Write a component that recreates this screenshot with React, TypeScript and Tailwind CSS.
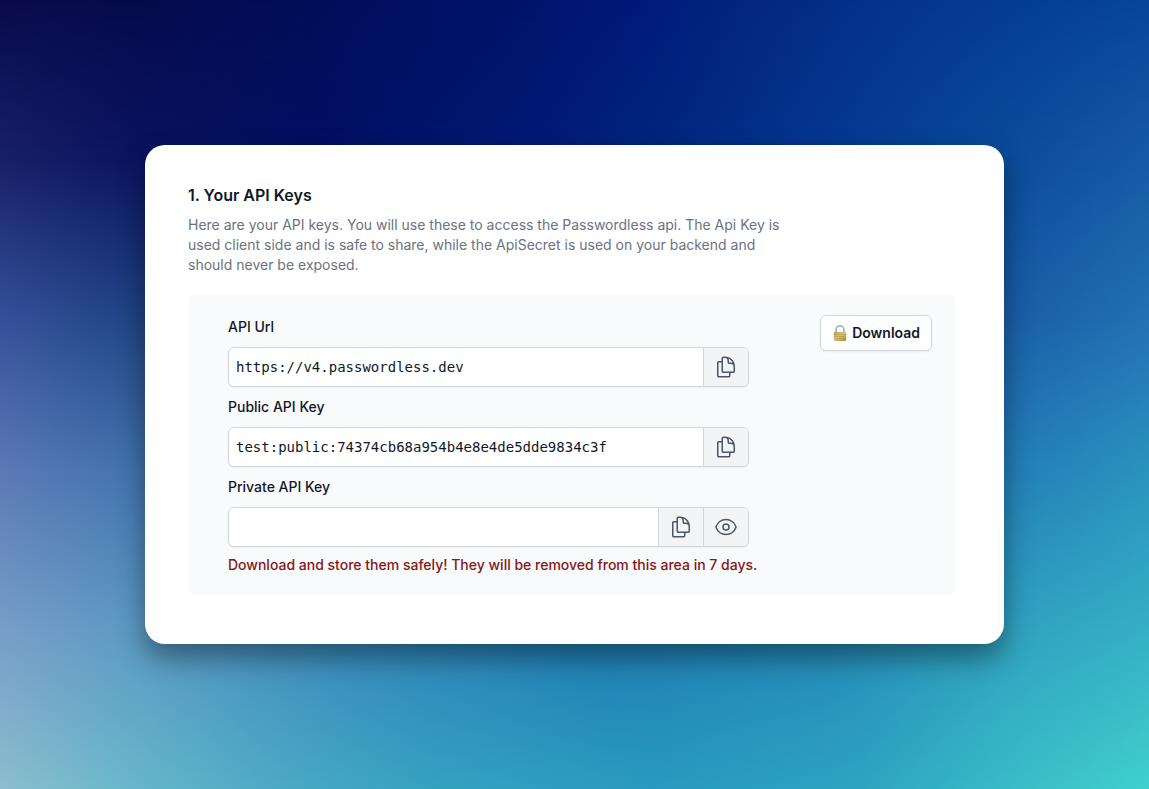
import React, { useState } from 'react';

// Heroicons outline "document-duplicate", folded corner variant
const CopyIcon: React.FC = () => (
  <svg
    className="h-6 w-6"
    viewBox="0 0 24 24"
    fill="none"
    stroke="currentColor"
    strokeWidth={1.5}
    strokeLinecap="round"
    strokeLinejoin="round"
    aria-hidden="true"
  >
    <path d="M15.75 17.25v3.375c0 .621-.504 1.125-1.125 1.125h-9.75a1.125 1.125 0 01-1.125-1.125V7.875c0-.621.504-1.125 1.125-1.125H6.75a9.06 9.06 0 011.5.124m7.5 10.376h3.375c.621 0 1.125-.504 1.125-1.125V11.25c0-4.46-3.243-8.161-7.5-8.876a9.06 9.06 0 00-1.5-.124H9.375c-.621 0-1.125.504-1.125 1.125v3.5m7.5 10.375H9.375a1.125 1.125 0 01-1.125-1.125v-9.25m12 6.625v-1.875a3.375 3.375 0 00-3.375-3.375h-1.5a1.125 1.125 0 01-1.125-1.125v-1.5a3.375 3.375 0 00-3.375-3.375H9.75" />
  </svg>
);

const EyeIcon: React.FC = () => (
  <svg
    className="h-6 w-6"
    viewBox="0 0 24 24"
    fill="none"
    stroke="currentColor"
    strokeWidth={1.5}
    strokeLinecap="round"
    strokeLinejoin="round"
    aria-hidden="true"
  >
    <path d="M2.036 12.322a1.012 1.012 0 010-.639C3.423 7.51 7.36 4.5 12 4.5c4.638 0 8.573 3.007 9.963 7.178.07.207.07.431 0 .639C20.577 16.49 16.64 19.5 12 19.5c-4.638 0-8.573-3.007-9.963-7.178z" />
    <path d="M15 12a3 3 0 11-6 0 3 3 0 016 0z" />
  </svg>
);

const LockIcon: React.FC = () => (
  <svg className="h-4 w-4" viewBox="0 0 16 16" aria-hidden="true">
    <defs>
      <linearGradient id="lock-body" x1="0" y1="0" x2="1" y2="1">
        <stop offset="0" stopColor="#b5a062" />
        <stop offset="0.45" stopColor="#dcc37a" />
        <stop offset="1" stopColor="#ab8c38" />
      </linearGradient>
    </defs>
    <path d="M4 8V4.8a4 4 0 0 1 8 0V8" fill="none" stroke="#8fa6ba" strokeWidth="1.5" />
    <rect x="1.8" y="7" width="12.4" height="9" rx="0.8" fill="url(#lock-body)" />
    <path d="M2.2 9.5h11.6M2.2 11.5h11.6M2.2 13.5h11.6" stroke="#a08838" strokeWidth="0.4" />
  </svg>
);

interface KeyFieldProps {
  id: string;
  label: string;
  defaultValue: string;
  secret?: boolean;
}

const KeyField: React.FC<KeyFieldProps> = ({ id, label, defaultValue, secret }) => {
  const [visible, setVisible] = useState(false);
  const buttonClass =
    'flex w-[45px] shrink-0 items-center justify-center border-l border-gray-300 bg-gray-100 text-gray-600';

  return (
    <div>
      <label htmlFor={id} className="block text-sm font-medium text-gray-900">
        {label}
      </label>
      <div className="mt-2.5 flex h-10 overflow-hidden rounded-md border border-gray-300 bg-white shadow-xs">
        <input
          id={id}
          type={secret && !visible ? 'password' : 'text'}
          defaultValue={defaultValue}
          readOnly
          className="min-w-0 flex-1 px-[7px] font-['DejaVu_Sans_Mono',monospace] text-sm text-gray-900 outline-none"
        />
        <button
          type="button"
          aria-label={`Copy ${label}`}
          className={buttonClass}
          onClick={() => navigator.clipboard.writeText(defaultValue)}
        >
          <CopyIcon />
        </button>
        {secret && (
          <button
            type="button"
            aria-label={`Show ${label}`}
            className={buttonClass}
            onClick={() => setVisible(!visible)}
          >
            <EyeIcon />
          </button>
        )}
      </div>
    </div>
  );
};

// Horizontal colour bands, each faded into the one above it
const Backdrop: React.FC = () => (
  <div className="grid [grid-area:1/1]" aria-hidden="true">
    <div className="[grid-area:1/1] bg-[linear-gradient(90deg,#0a0a4e_0%,#060b4c_12%,#010e5a_28%,#001268_43%,#001a7a_56%,#04287e_66%,#053690_80%,#06469a_100%)]" />
    <div className="[grid-area:1/1] bg-[linear-gradient(90deg,#182066_0%,#09125e_13%,#000f62_28%,#001a74_45%,#00267e_57%,#053890_72%,#0a4c9a_88%,#165aa6_100%)] [mask-image:linear-gradient(transparent_0%,black_20%)]" />
    <div className="[grid-area:1/1] bg-[linear-gradient(90deg,#34509a_0%,#204484_12%,#103880_40%,#1058a0_70%,#1a5ea8_88%,#2470b4_100%)] [mask-image:linear-gradient(transparent_20%,black_40%)]" />
    <div className="[grid-area:1/1] bg-[linear-gradient(90deg,#5c7ab6_0%,#4274ae_12%,#2468a4_40%,#2070ac_70%,#2480b8_88%,#2a94be_100%)] [mask-image:linear-gradient(transparent_40%,black_60%)]" />
    <div className="[grid-area:1/1] bg-[linear-gradient(90deg,#789ec8_0%,#5c9ac4_12%,#3888bc_30%,#1e7cb4_52%,#2488b8_72%,#30a2c0_88%,#36b0c6_100%)] [mask-image:linear-gradient(transparent_60%,black_80%)]" />
    <div className="[grid-area:1/1] bg-[linear-gradient(90deg,#8cbece_0%,#6cb8cb_10%,#4caac5_24%,#36a2c1_37%,#289abe_57%,#2ea4c1_75%,#3abec8_89%,#40d0cc_100%)] [mask-image:linear-gradient(transparent_80%,black_100%)]" />
  </div>
);

const App: React.FC = () => {
  return (
    <div className="grid min-h-screen font-['Inter',sans-serif]">
      <Backdrop />
      <main className="z-10 flex items-center justify-center p-4 [grid-area:1/1]">
        <section className="w-full max-w-[859px] rounded-[20px] bg-white px-[43px] pt-[38px] pb-[49px] shadow-[0_14px_28px_rgba(0,0,0,0.4)]">
          <h1 className="text-base font-semibold text-gray-900">1. Your API Keys</h1>
          <p className="mt-2 max-w-[592px] text-sm text-gray-500">
            Here are your API keys. You will use these to access the Passwordless api. The Api Key is used
            client side and is safe to share, while the ApiSecret is used on your backend and should never be
            exposed.
          </p>

          <div className="mt-5 mr-[5px] flex items-start justify-between gap-6 rounded-md bg-slate-50 py-5 pr-6 pl-10">
            <div className="w-full max-w-[521px] pt-0.5">
              <div className="space-y-2.5">
                <KeyField id="api-url" label="API Url" defaultValue="https://v4.passwordless.dev" />
                <KeyField
                  id="public-key"
                  label="Public API Key"
                  defaultValue="test:public:74374cb68a954b4e8e4de5dde9834c3f"
                />
                <KeyField id="private-key" label="Private API Key" defaultValue="" secret />
              </div>
              <p className="mt-2 text-sm font-medium whitespace-nowrap text-red-900">
                Download and store them safely! They will be removed from this area in 7 days.
              </p>
            </div>
            <button
              type="button"
              className="flex h-9 items-center gap-1 rounded-md border border-gray-300 bg-white px-[11px] text-sm font-semibold text-gray-900 shadow-xs"
            >
              <LockIcon />
              Download
            </button>
          </div>
        </section>
      </main>
    </div>
  );
};

export default App;
